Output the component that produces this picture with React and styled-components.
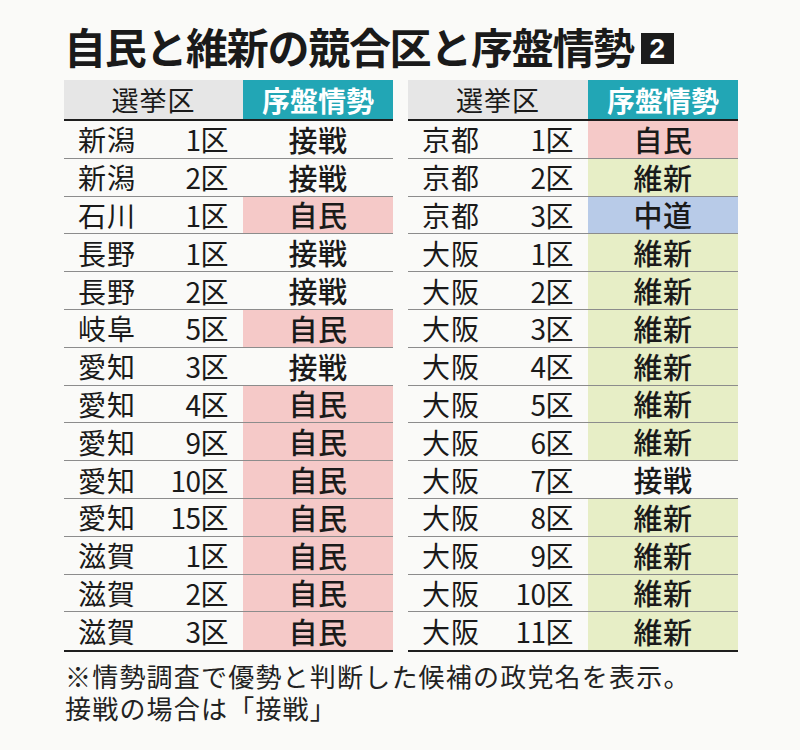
import React from "react";
import styled, { createGlobalStyle } from "styled-components";

const Global = createGlobalStyle`
  html, body { margin: 0; padding: 0; background: #fafaf8; }
  body { font-family: "Noto Sans CJK JP", "Noto Sans", sans-serif; color: #1a1a1a; }
`;

const Page = styled.div`
  width: 800px;
  height: 750px;
  box-sizing: border-box;
  padding: 22px 0 0 64px;
  background: #fafaf8;
`;

const Title = styled.h1`
  margin: 0 0 10px 0;
  height: 48px;
  white-space: nowrap;
  font-family: "Noto Sans CJK JP", sans-serif;
  font-weight: 700;
  font-size: 42px;
  line-height: 48px;
  letter-spacing: -1.3px;
  color: #1a1a1a;
`;

const Badge = styled.span`
  display: inline-block;
  box-sizing: border-box;
  width: 33px;
  height: 31px;
  margin: 11px 0 0 7px;
  vertical-align: top;
  background: #1c1c1c;
  color: #ffffff;
  text-align: center;
  letter-spacing: 0;
  font-family: "Liberation Sans", "Noto Sans", sans-serif;
  font-weight: 700;
  font-size: 28px;
  line-height: 31px;
`;

const Tables = styled.div`
  display: flex;
  gap: 15px;
  align-items: flex-start;
`;

const Table = styled.div`
  width: ${(p) => p.$w}px;
  display: grid;
  grid-template-columns: 1fr 150px;
  border-bottom: 2px solid #1e1e1e;
`;

const HeadCell = styled.div`
  height: 41px;
  box-sizing: border-box;
  border-bottom: 2px solid #1e1e1e;
  display: flex;
  align-items: center;
  justify-content: center;
  font-size: ${(p) => (p.$accent ? 28 : 27)}px;
  font-weight: ${(p) => (p.$accent ? 700 : 400)};
  background: ${(p) => (p.$accent ? "#22a6b5" : "#e6e6e6")};
  color: ${(p) => (p.$accent ? "#ffffff" : "#1a1a1a")};
  letter-spacing: ${(p) => (p.$accent ? "0px" : "1px")};
  line-height: 1;
`;

const DistrictCell = styled.div`
  height: 37.8px;
  box-sizing: border-box;
  border-bottom: ${(p) => (p.$last ? "none" : "1px solid #8c8c8c")};
  display: flex;
  align-items: center;
  justify-content: space-between;
  padding: 0 15px 0 14px;
  font-size: 28px;
  font-weight: 400;
  line-height: 1;
`;

const Pref = styled.span`
  letter-spacing: 1px;
`;

const Num = styled.span`
  letter-spacing: -0.5px;
`;

const colors = {
  自民: "#f5c9c8",
  維新: "#e7eec6",
  中道: "#b8cbe8",
  接戦: "transparent",
};

const StatusCell = styled.div`
  height: 37.8px;
  box-sizing: border-box;
  border-bottom: ${(p) => (p.$last ? "none" : "1px solid #8c8c8c")};
  background: ${(p) => colors[p.$party]};
  display: flex;
  align-items: center;
  justify-content: center;
  font-size: 29px;
  font-weight: 500;
  letter-spacing: 0.5px;
  line-height: 1;
`;

const Note = styled.div`
  margin: 8px 0 0 1px;
  display: flex;
  flex-direction: column;
`;

const NoteLine = styled.div`
  height: 32px;
  display: flex;
  align-items: center;
  font-size: 26px;
  line-height: 1;
  font-weight: 400;
  letter-spacing: 1.2px;
  color: #222;
  white-space: nowrap;
`;

const left = [
  ["新潟", "1区", "接戦"],
  ["新潟", "2区", "接戦"],
  ["石川", "1区", "自民"],
  ["長野", "1区", "接戦"],
  ["長野", "2区", "接戦"],
  ["岐阜", "5区", "自民"],
  ["愛知", "3区", "接戦"],
  ["愛知", "4区", "自民"],
  ["愛知", "9区", "自民"],
  ["愛知", "10区", "自民"],
  ["愛知", "15区", "自民"],
  ["滋賀", "1区", "自民"],
  ["滋賀", "2区", "自民"],
  ["滋賀", "3区", "自民"],
];

const right = [
  ["京都", "1区", "自民"],
  ["京都", "2区", "維新"],
  ["京都", "3区", "中道"],
  ["大阪", "1区", "維新"],
  ["大阪", "2区", "維新"],
  ["大阪", "3区", "維新"],
  ["大阪", "4区", "維新"],
  ["大阪", "5区", "維新"],
  ["大阪", "6区", "維新"],
  ["大阪", "7区", "接戦"],
  ["大阪", "8区", "維新"],
  ["大阪", "9区", "維新"],
  ["大阪", "10区", "維新"],
  ["大阪", "11区", "維新"],
];

function DistrictTable({ rows, width }) {
  return (
    <Table $w={width}>
      <HeadCell>選挙区</HeadCell>
      <HeadCell $accent>序盤情勢</HeadCell>
      {rows.map(([pref, num, party], i) => {
        const last = i === rows.length - 1;
        return (
          <React.Fragment key={pref + num}>
            <DistrictCell $last={last}>
              <Pref>{pref}</Pref>
              <Num>{num}</Num>
            </DistrictCell>
            <StatusCell $last={last} $party={party}>
              {party}
            </StatusCell>
          </React.Fragment>
        );
      })}
    </Table>
  );
}

export default function App() {
  return (
    <>
      <Global />
      <Page>
        <Title>
          自民と維新の競合区と序盤情勢
          <Badge>2</Badge>
        </Title>
        <Tables>
          <DistrictTable rows={left} width={329} />
          <DistrictTable rows={right} width={330} />
        </Tables>
        <Note>
          <NoteLine>※情勢調査で優勢と判断した候補の政党名を表示。</NoteLine>
          <NoteLine>接戦の場合は「接戦」</NoteLine>
        </Note>
      </Page>
    </>
  );
}
